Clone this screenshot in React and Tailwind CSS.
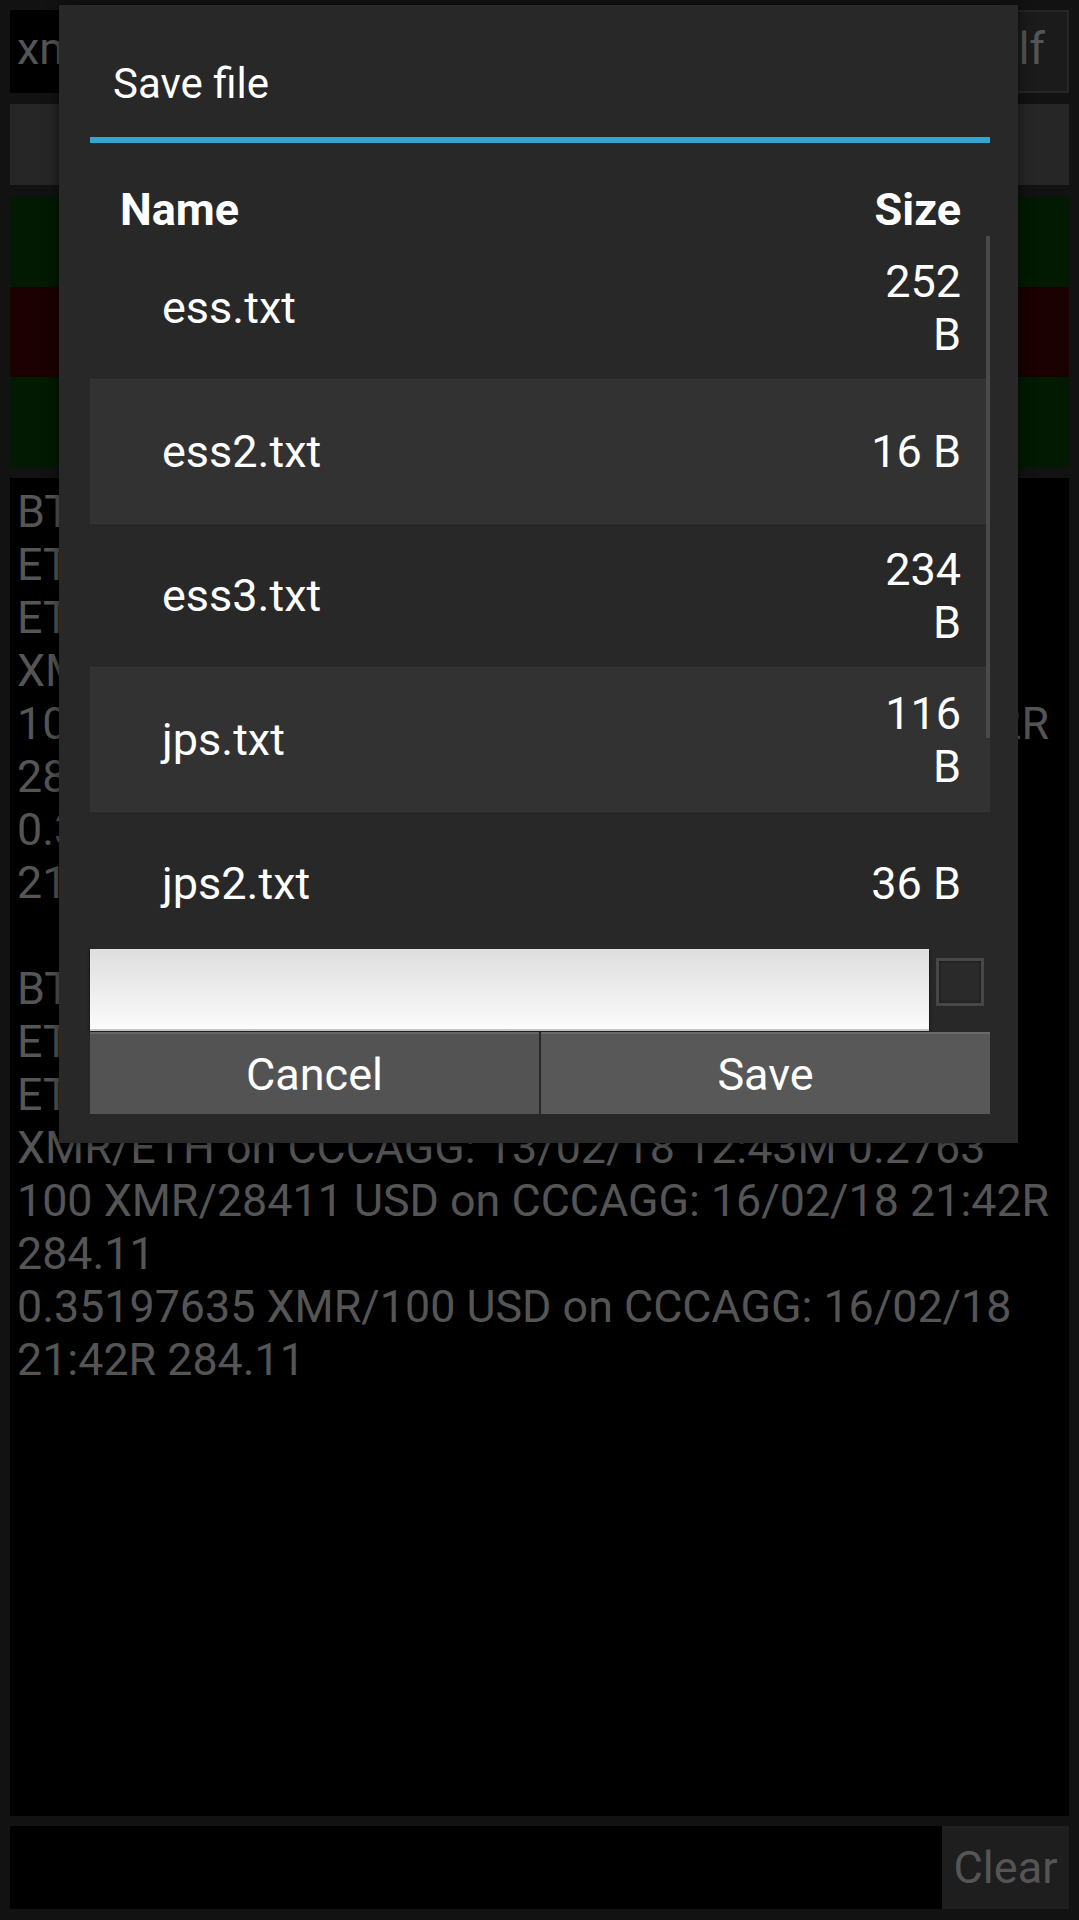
import React from "react";

const logBlock = [
  "BTC/USD on CCCAGG: 13/02/18 12:43M 8530",
  "ETH/USD on CCCAGG: 13/02/18 12:43M 865.2",
  "ETH/BTC on CCCAGG: 13/02/18 12:43M 0.101",
  "XMR/ETH on CCCAGG: 13/02/18 12:43M 0.2763",
  "100 XMR/28411 USD on CCCAGG: 16/02/18 21:42R",
  "284.11",
  "0.35197635 XMR/100 USD on CCCAGG: 16/02/18",
  "21:42R 284.11",
];

const logLines = [...logBlock, "", ...logBlock];

const files = [
  { name: "ess.txt", size: ["252", "B"] },
  { name: "ess2.txt", size: ["16 B"] },
  { name: "ess3.txt", size: ["234", "B"] },
  { name: "jps.txt", size: ["116", "B"] },
  { name: "jps2.txt", size: ["36 B"] },
];

const FileRow = ({ file, index }) => {
  const odd = index % 2 === 1;
  return (
    <div
      className={`flex items-center justify-between h-[144px] shrink-0 pl-[72px] pr-[29px] border-b border-[#363636] ${
        odd ? "bg-[#323232]" : "bg-[#282828]"
      }`}
    >
      <span>{file.name}</span>
      <div className="flex flex-col items-end">
        {file.size.map((line, i) => (
          <span key={i}>{line}</span>
        ))}
      </div>
    </div>
  );
};

const SaveDialog = () => {
  return (
    <div className="absolute left-[59px] top-[5px] w-[959px] h-[1138px] bg-[#282828] flex flex-col pl-[31px] pr-[28px] shadow-[0_0_12px_rgba(0,0,0,0.6)]">
      {/* title */}
      <div className="pt-[54px] pl-[23px] text-[42px] leading-[49px] text-white">
        Save file
      </div>
      <div className="mt-[29px] h-[6px] bg-[#33a6d0]" />

      {/* column header */}
      <div className="flex justify-between items-end h-[93px] pl-[30px] pr-[29px] font-bold text-white">
        <span>Name</span>
        <span>Size</span>
      </div>

      {/* file list */}
      <div className="relative h-[713px] overflow-hidden flex flex-col text-white">
        {files.map((f, i) => (
          <FileRow key={f.name} file={f} index={i} />
        ))}
        <div className="absolute right-0 top-0 w-[4px] h-[502px] bg-[#4a4a4a]" />
      </div>

      {/* filename input */}
      <div className="flex items-start h-[82px]">
        <div className="w-[839px] h-full bg-gradient-to-b from-[#dedede] to-[#fbfbfb] border-b-2 border-[#c4c4c4] shadow-[0_0_3px_rgba(0,0,0,0.7)]" />
        <div className="ml-[7px] mt-[9px] w-[48px] h-[48px] border-[3px] border-[#474747] bg-[#2a2a2a] shadow-[inset_0_0_3px_rgba(0,0,0,0.6)]" />
      </div>

      {/* buttons */}
      <div className="flex mt-[1px] h-[82px] gap-[2px] text-white">
        <button className="flex-1 bg-[#535353] border-t-2 border-[#666] flex items-center justify-center">
          Cancel
        </button>
        <button className="flex-1 bg-[#585858] border-t-2 border-[#6a6a6a] flex items-center justify-center">
          Save
        </button>
      </div>
    </div>
  );
};

export default function App() {
  return (
    <div className="relative w-[1079px] h-[1920px] bg-[#121212] overflow-hidden font-[Roboto,sans-serif] text-[45px] leading-[53px]">
      <div className="flex flex-col h-full px-[10px] pt-[10px] pb-[11px]">
        {/* top input + button */}
        <div className="flex h-[83px] shrink-0">
          <div className="flex-1 bg-black flex items-center pl-[7px] pb-[6px] text-[#555]">
            xmr
          </div>
          <div className="w-[124px] bg-[#1b1b1b] border-2 border-[#262626] flex items-center justify-end pr-[22px] pb-[6px] text-[#555]">
            Self
          </div>
        </div>

        {/* spinner bar */}
        <div className="mt-[11px] h-[81px] shrink-0 bg-[#262626]" />

        {/* coloured price rows */}
        <div className="mt-[12px] flex flex-col shrink-0">
          <div className="h-[90px] bg-[#011a01]" />
          <div className="h-[90px] bg-[#1b0101]" />
          <div className="h-[90px] bg-[#011a01]" />
        </div>

        {/* log output */}
        <div className="mt-[11px] flex-1 bg-black pt-[7px] pl-[7px] text-[44.8px] text-[#555] overflow-hidden">
          {logLines.map((line, i) => (
            <div key={i} className="h-[53px] whitespace-nowrap">
              {line}
            </div>
          ))}
        </div>

        {/* bottom input + clear */}
        <div className="mt-[10px] flex h-[83px] shrink-0">
          <div className="flex-1 bg-black" />
          <div className="w-[127px] bg-[#1e1e1e] flex items-center justify-center text-[#555]">
            Clear
          </div>
        </div>
      </div>

      <SaveDialog />
    </div>
  );
}
